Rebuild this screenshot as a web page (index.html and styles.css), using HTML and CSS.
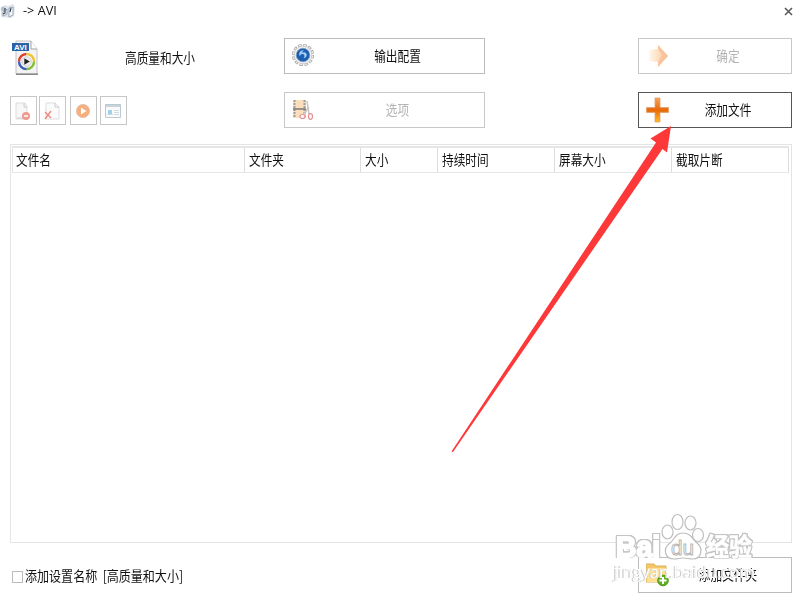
FILE: index.html
```html
<!DOCTYPE html>
<html lang="zh-CN">
<head>
    <meta charset="UTF-8">
    <title>-&gt; AVI</title>
    <link rel="stylesheet" href="styles.css">
</head>
<body>
    <div class="window">
        <header class="titlebar">
            <svg class="app-icon" width="15" height="16" viewBox="0 0 15 16">
                <path d="M1 4l4-2 3 1 5-2 2 3-1 9-3 2-10-1z" fill="#dfe4ea"/>
                <circle cx="3" cy="6" r="2.300" fill="#b4c0cb"/>
                <path d="M3 9l4-3v5l-4 2z" fill="#f7fafc" stroke="#8793a2" stroke-width=".8"/>
                <path d="M9 5l4-1v8l-4 2z" fill="#f7fafc" stroke="#8996a6" stroke-width=".8"/>
                <path d="M5 5v5l-2 1M11 5l-1 4" fill="none" stroke="#334961" stroke-width="1.2"/>
            </svg>
            <span class="title">-&gt; AVI</span>
            <svg class="close" width="9" height="9" viewBox="0 0 9 9"><path d="M1 1l7 7M8 1L1 8" stroke="#555" stroke-width="1.5"/></svg>
        </header>

        <div class="toolbar">
            <div class="format">
                <svg width="28" height="36" viewBox="0 0 28 36">
                    <path d="M4 1h15l6 8v25H4z" fill="#f3f3f3" stroke="#c4c4c4"/>
                    <path d="M4 34.2h22" stroke="#858585" stroke-width="1.5"/>
                    <path d="M19 1v8h6" fill="#fff" stroke="#a4a4a4"/>
                    <rect y="3" width="17" height="8" fill="#2864aa"/>
                    <text x="2" y="10" class="icon-text">AVI</text>
                    <circle cx="14.5" cy="21.5" r="7.5" fill="#fff"/>
                    <path d="M14.5 14a7.5 7.5 0 0 0-7.5 7.5" fill="none" stroke="#df3d2c" stroke-width="2.4"/>
                    <path d="M14.5 14a7.5 7.5 0 0 1 7.5 7.5" fill="none" stroke="#edc32b" stroke-width="2.4"/>
                    <path d="M22 21.5a7.5 7.5 0 0 1-7.5 7.5" fill="none" stroke="#83bd34" stroke-width="2.4"/>
                    <path d="M7 21.5a7.5 7.5 0 0 0 7.5 7.5" fill="none" stroke="#3c60ba" stroke-width="2.4"/>
                    <circle cx="14.5" cy="21.5" r="4.8" fill="#eee" stroke="#ccc"/>
                    <path d="M12.3 18.2l5.5 3.3-5.5 3.3z" fill="#222"/>
                </svg>
                <span class="label">高质量和大小</span>
            </div>

            <button class="btn config">
                <svg width="24" height="26" viewBox="0 0 24 26">
                    <circle cx="11" cy="12" r="9.8" fill="none" stroke="#9c9c9c" stroke-width="2.6" stroke-dasharray="3.4 1.73"/>
                    <circle cx="11" cy="12" r="9.8" fill="none" stroke="#eee" stroke-width="1.4" stroke-dasharray="2.2 2.93" stroke-dashoffset="-.6"/>
                    <circle cx="11" cy="12" r="8.8" fill="#f2f2f2" stroke="#c8c8c8" stroke-width=".8"/>
                    <circle cx="11" cy="12" r="6.8" fill="#1c5eb1" stroke="#7f9cc1" stroke-width=".7"/>
                    <path d="M12 7.200c-4-.4-6 3-4 6 .3-2 1.600-2.600 3-2.200 1.800.6 2 3 .4 4.300 3-.3 4.300-3.300 2.500-5.300-1.200-1.200-2.800-.8-3.700-.2.200-1.200.8-2.100 1.800-2.600z" fill="#a5cdf5"/>
                </svg>
                <span class="label">输出配置</span>
            </button>

            <button class="btn ok" disabled>
                <svg width="24" height="26" viewBox="0 0 24 26">
                    <defs>
                        <linearGradient id="next" x1="0" x2="1"><stop stop-color="#fff8ef"/><stop offset="1" stop-color="#fac38c"/></linearGradient>
                    </defs>
                    <path d="M3 7l9-1V2l10 11-10 11v-5l-9-1z" fill="url(#next)"/>
                    <path d="M12 2l10 11-10 11v-5l4-7-4-6z" fill="#f9c39d"/>
                </svg>
                <span class="label">确定</span>
            </button>

            <div class="tools">
                <button class="tool">
                    <svg width="20" height="22" viewBox="0 0 20 22">
                        <path d="M3 3h9l2 4v12H3z" fill="#f7f7f7" stroke="#ddd"/><path d="M4 18h9M11 3v4h3" fill="none" stroke="#ccc"/>
                        <circle cx="13" cy="16" r="4" fill="#ee9a91"/><path d="M11 16h4" stroke="#fff" stroke-width="1.5"/>
                    </svg>
                </button>
                <button class="tool">
                    <svg width="20" height="22" viewBox="0 0 20 22">
                        <path d="M4 3h9l4 4v12H4z" fill="#fbfbfb" stroke="#ddd"/><path d="M13 3v4h4" fill="none" stroke="#ccc"/>
                        <path d="M3 12l6 6M9 11l-6 8" stroke="#ed8982" stroke-width="1.4"/>
                    </svg>
                </button>
                <button class="tool play">
                    <svg width="20" height="22" viewBox="0 0 20 22">
                        <circle cx="10" cy="11" r="6.6" fill="#f6ae7d" stroke="#e3c5b1"/><path d="M8 7.500l5.500 3.500L8 14.500z" fill="#fff"/>
                    </svg>
                </button>
                <button class="tool">
                    <svg width="20" height="22" viewBox="0 0 20 22">
                        <path d="M2.500 4.500h15v13h-15z" fill="#fafafa" stroke="#bdc9d1"/><path d="M3 6h14" stroke="#c8d3db" stroke-width="2"/>
                        <path d="M5 10h4v4H5z" fill="#9fd0ef"/><path d="M4 14.500h6M11 10.500h5M11 12.500h5M11 14.500h5" stroke="#d0dae1"/>
                    </svg>
                </button>
            </div>

            <button class="btn options" disabled>
                <svg width="24" height="26" viewBox="0 0 24 26">
                    <path d="M1 3h13v18H1z" fill="#fbdfbc"/>
                    <path d="M2.500 3v18M12.500 3v18" stroke="#a09a94" stroke-width="2" stroke-dasharray="2 1"/>
                    <path d="M1 12h13" stroke="#777" stroke-width="1.5"/>
                    <path d="M15 4l2 13M17 10l-5 7" stroke="#c5c5c5" stroke-width="1.5"/>
                    <ellipse cx="10.500" cy="19.500" rx="2.500" ry="2" fill="#fff" stroke="#e89191" stroke-width="1.200"/>
                    <ellipse cx="18.500" cy="19.500" rx="2" ry="2.800" fill="#fff" stroke="#e89191" stroke-width="1.200"/>
                </svg>
                <span class="label">选项</span>
            </button>

            <button class="btn add">
                <svg width="24" height="26" viewBox="0 0 24 26">
                    <defs>
                        <linearGradient id="plus" x2="0" y2="1"><stop stop-color="#f4a258"/><stop offset=".5" stop-color="#e8690b"/><stop offset="1" stop-color="#ffbb25"/></linearGradient>
                    </defs>
                    <path d="M9 1h5v9.500h8.500v5H14V25H9v-9.500H.5v-5H9z" fill="url(#plus)" stroke="#e3a06d" stroke-width=".8"/>
                </svg>
                <span class="label">添加文件</span>
            </button>
        </div>

        <div class="list">
            <div class="list-head">
                <div><span class="label">文件名</span></div>
                <div><span class="label">文件夹</span></div>
                <div><span class="label">大小</span></div>
                <div><span class="label">持续时间</span></div>
                <div><span class="label">屏幕大小</span></div>
                <div><span class="label">截取片断</span></div>
            </div>
        </div>

        <footer class="footer">
            <div class="check">
                <span class="box"></span>
                <span class="label">添加设置名称&nbsp; [高质量和大小]</span>
            </div>
            <button class="btn folder">
                <svg width="24" height="26" viewBox="0 0 24 26">
                    <path d="M0 2h8l2 2h10v16H0z" fill="#f3c668" stroke="#dcb25c"/>
                    <path d="M2 6h18l-1 14H1z" fill="#ffe094"/>
                    <circle cx="17" cy="18.500" r="5.300" fill="#62b020" stroke="#4e981c"/>
                    <path d="M17 15v7M13.500 18.500h7" stroke="#fff" stroke-width="2"/>
                </svg>
                <span class="label">添加文件夹</span>
            </button>
        </footer>

        <svg class="arrow" width="240" height="340" viewBox="440 120 240 340">
            <path d="M671 126L650.500 138.500L656 142.500L451.500 451.500L453 452L662.500 149L667 152.500Z" fill="#fd3838"/>
        </svg>

        <svg class="watermark" width="160" height="80" viewBox="608 508 160 80">
            <g class="outline">
                <ellipse cx="667.500" cy="532" rx="5.500" ry="7"/>
                <ellipse cx="677.500" cy="522" rx="5.500" ry="7.500"/>
                <ellipse cx="690.500" cy="523" rx="5.500" ry="7"/>
                <ellipse cx="698" cy="535" rx="5.500" ry="6.500"/>
                <path d="M683 533c-8 0-8 6-13 10-8 6-5 16 4 16 4 0 5-1 9-1s6 1 10 1c8 0 11-10 4-16-5-4-6-10-14-10z"/>
            </g>
            <text class="brand" x="616" y="557" textLength="44" lengthAdjust="spacingAndGlyphs">Bai</text>
            <text class="du" x="671" y="555" textLength="23" lengthAdjust="spacingAndGlyphs">du</text>
            <text class="brand cn" x="706" y="556" textLength="46" lengthAdjust="spacingAndGlyphs">经验</text>
            <text class="site" x="614" y="578" textLength="141" lengthAdjust="spacingAndGlyphs">jingyan.baidu.com</text>
        </svg>
    </div>
</body>
</html>
```
FILE: styles.css
```css
* {
    box-sizing: border-box;
}
body {
    margin: 0;
    background: #fff;
    color: #111;
    font-family: "Noto Sans CJK SC", sans-serif;
    font-size: 14px;
}
svg {
    display: block;
    flex-shrink: 0;
}
.window {
    position: relative;
    width: 800px;
    height: 600px;
    overflow: hidden;
}
.titlebar {
    display: flex;
    align-items: center;
    height: 23px;
    padding-right: 7px;
}
.app-icon {
    margin-top: -2px;
}
.title {
    margin: -2px 0 0 8px;
    font: 12px "Open Sans", sans-serif;
    transform: scaleX(1.06);
    transform-origin: left;
}
.close {
    margin-left: auto;
}
.toolbar {
    display: grid;
    grid-template-columns: 274px 201px 307px;
    grid-template-rows: 36px 36px;
    row-gap: 18px;
    padding: 15px 8px 0 10px;
}
.ok, .add {
    justify-self: end;
}
.format {
    display: flex;
    align-items: center;
    padding: 4px 0 0 2px;
}
.format .label {
    margin: -2px 0 0 85px;
}
.label {
    display: inline-block;
    white-space: nowrap;
    line-height: 20px;
    transform: scaleX(.833);
    transform-origin: left;
}
.btn {
    display: flex;
    align-items: center;
    height: 36px;
    padding: 0 7px;
    border: 1px solid #bcbcbc;
    background: #fff;
    color: #111;
    font: inherit;
}
.btn .label {
    flex: 1;
    margin: -3px 0 0 2px;
    text-align: center;
    transform-origin: center;
}
.config, .options {
    width: 201px;
}
.ok, .add, .folder {
    width: 154px;
}
.btn:disabled {
    border-color: #c8c8c8;
    color: #b4b4b4;
}
.btn.add {
    border-color: #555;
}
.tools {
    display: flex;
    gap: 3px;
    padding-top: 4px;
}
.tool {
    width: 27px;
    height: 29px;
    padding: 3px 2px;
    border: 1px solid #c6c6c6;
    background: #fff;
}
.tool:first-child {
    margin-right: -1px;
}
.tool.play {
    margin-left: 1px;
}
.icon-text {
    fill: #fff;
    font: bold 8px "Liberation Sans", sans-serif;
}
.list {
    width: 782px;
    height: 399px;
    margin: 16px 0 0 10px;
    padding: 1px;
    border: 1px solid #e4e4e4;
}
.list-head {
    display: grid;
    grid-template-columns: 232px 116px 77px 117px 117px 117px;
    width: 777px;
    height: 27px;
    border: solid #e6e6e6;
    border-width: 2px 0 1px 1px;
}
.list-head div {
    padding: 1px 0 0 3px;
    border-right: 1px solid #ddd;
}
.list-head div + div {
    padding-left: 4px;
}
.list-head .label {
    margin-top: -1px;
}
.footer {
    display: flex;
    align-items: center;
    justify-content: space-between;
    padding: 14px 8px 0 12px;
}
.check {
    display: flex;
    align-items: center;
    padding-top: 3px;
}
.check .label {
    margin-top: -3px;
    transform: scaleX(.86);
}
.box {
    width: 11px;
    height: 12px;
    margin-right: 2px;
    border: 1px solid #bbb;
}
.arrow {
    position: absolute;
    left: 440px;
    top: 120px;
}
.watermark {
    position: absolute;
    left: 608px;
    top: 508px;
}
.outline {
    fill: #fff;
    stroke: #bebebe;
    stroke-width: 1.2;
}
.brand, .du, .site {
    fill: #fff;
    stroke: #b8b8b8;
    stroke-width: 1;
    font-family: "Liberation Sans", sans-serif;
}
.brand {
    stroke: #fff;
    stroke-width: 2;
    font-size: 30px;
    font-weight: bold;
    filter: drop-shadow(1px 0 0 #c4c4c4) drop-shadow(-1px 0 0 #c4c4c4) drop-shadow(0 .6px 0 #c4c4c4) drop-shadow(0 -.6px 0 #c4c4c4);
}
.cn {
    stroke-width: .6;
    font-family: "Noto Sans CJK SC", sans-serif;
    font-size: 25px;
}
.du {
    font-size: 21px;
}
.site {
    stroke: none;
    font-family: "Open Sans", sans-serif;
    font-size: 17px;
    filter: drop-shadow(.6px 0 0 #ccc) drop-shadow(-.6px .6px 0 #ccc);
}
```
